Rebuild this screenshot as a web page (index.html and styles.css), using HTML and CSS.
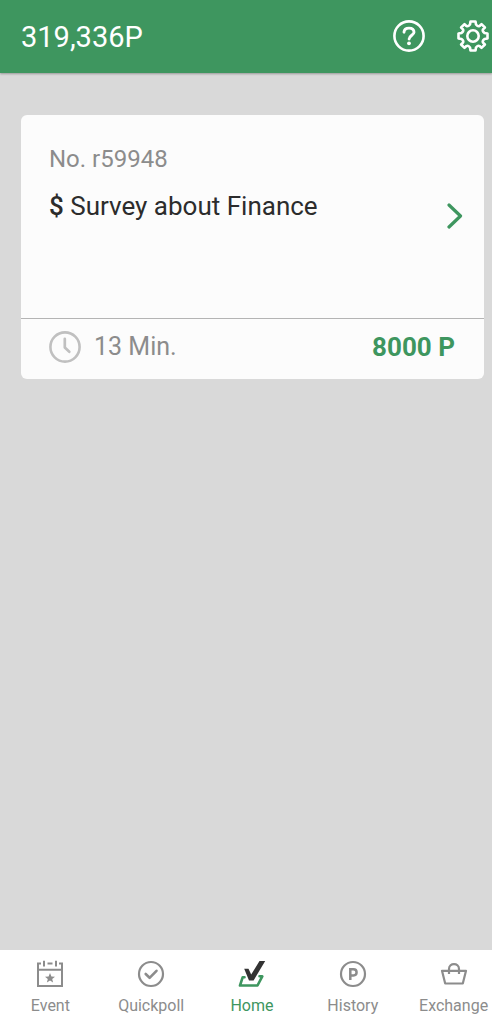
FILE: index.html
```html
<!DOCTYPE html>
<html lang="en">
<head>
<meta charset="utf-8">
<meta name="viewport" content="width=device-width, initial-scale=1">
<title>Surveys</title>
<link rel="stylesheet" href="styles.css">
</head>
<body>
<div class="app">
  <header class="topbar">
    <h1 class="balance">319,336P</h1>
    <div class="actions">
      <button class="icon-button" type="button" aria-label="Help">
        <svg class="icon" viewBox="-17 -17 34 34" fill="none" stroke="currentColor" stroke-linecap="round">
          <circle r="14.6" stroke-width="2.6"/>
          <path d="M-5-3.800C-4.800-6.600-2.800-7.900 0-7.900c3.100 0 5 1.700 5 4.200C5-.9.100-.4.100 3.100" stroke-width="2.900"/>
          <circle cy="7.300" r="1.900" fill="currentColor" stroke="none"/>
        </svg>
      </button>
      <button class="icon-button" type="button" aria-label="Settings">
        <svg class="icon" viewBox="-17 -17 34 34" fill="none" stroke="currentColor" stroke-width="2.600" stroke-linejoin="round">
          <circle r="5.700"/>
          <path d="M14.500-2.500V2.500L11.500 3Q9 5 10 6.600L11.900 8.500L8.500 11.900L6.600 10Q5 9 3 11.500L2.500 14.500H-2.500L-3 11.500Q-5 9-6.600 10L-8.500 11.900L-11.900 8.500L-10 6.600Q-9 5-11.500 3L-14.500 2.500V-2.500L-11.500-3Q-9-5-10-6.600L-11.900-8.500L-8.500-11.900L-6.600-10Q-5-9-3-11.500L-2.500-14.500H2.500L3-11.500Q5-9 6.600-10L8.500-11.900L11.900-8.500L10-6.600Q9-5 11.500-3Z"/>
        </svg>
      </button>
    </div>
  </header>

  <main class="content">
    <a class="card" href="#survey">
      <div class="card-body">
        <div class="card-text">
          <p class="card-number">No. r59948</p>
          <h2 class="card-title"><span class="currency">$</span> Survey about Finance</h2>
        </div>
        <svg class="chevron" viewBox="0 0 16 28" fill="none" stroke="currentColor" stroke-width="3.200" stroke-linecap="round" stroke-linejoin="round"><path d="M2 3L13.500 14L2 25"/></svg>
      </div>
      <div class="card-footer">
        <svg class="clock" viewBox="0 0 32 32" fill="none" stroke="currentColor" stroke-linecap="round" stroke-linejoin="round"><circle cx="16" cy="16" r="14.600" stroke-width="2.600"/><path d="M15.800 7.800V16.500L20.300 20.800" stroke-width="2.700"/></svg>
        <span class="duration">13 Min.</span>
        <strong class="reward">8000 P</strong>
      </div>
    </a>
  </main>

  <nav class="tabs" aria-label="Main">
    <a class="tab" href="#event">
      <svg class="tab-icon" viewBox="0 0 28 28" fill="none" stroke="currentColor" stroke-width="2"><path d="M5 3.500H2V26H26V3.500H23M11.500 3.500H16.500M2 9.700H26M8 .800V6.500M20 .800V6.500"/><path d="M14 13L15.400 16.400L19 16.700L16.200 19L17.100 22.600L14 20.600L10.900 22.600L11.800 19L9 16.700L12.600 16.400Z" fill="currentColor" stroke="none"/></svg>
      <span>Event</span>
    </a>
    <a class="tab" href="#quickpoll">
      <svg class="tab-icon" viewBox="0 0 28 28" fill="none" stroke="currentColor" stroke-linecap="round" stroke-linejoin="round"><circle cx="14" cy="14" r="12" stroke-width="2.200"/><path d="M8.700 14L12.600 17.800L19.500 10.800" stroke-width="2.600"/></svg>
      <span>Quickpoll</span>
    </a>
    <a class="tab tab-active" href="#home" aria-current="page">
      <svg class="tab-icon" viewBox="0 0 28 28"><path d="M6.500 17.200H4.700L2 25.500H19.500L24.300 16.300H21.500" fill="none" stroke="#3e965f" stroke-width="2.600" stroke-linejoin="round" stroke-linecap="round"/><path d="M6.200 8.700H10.500L13.200 14.500L21.500 1H27.200L15.600 20.500H11Z" fill="#333"/></svg>
      <span>Home</span>
    </a>
    <a class="tab" href="#history">
      <svg class="tab-icon" viewBox="0 0 28 28" fill="none" stroke="currentColor"><circle cx="14" cy="14" r="12" stroke-width="2.200"/><path d="M11.300 20V9.200H14.500C18.600 9.200 18.600 15.400 14.500 15.400H11.300" stroke-width="2.500"/></svg>
      <span>History</span>
    </a>
    <a class="tab" href="#exchange">
      <svg class="tab-icon" viewBox="0 0 28 28" fill="none" stroke="currentColor" stroke-width="2.200" stroke-linejoin="round"><path d="M2 10.800H26L22.800 23.500H5.200ZM9 14V9C9 2.600 19 2.600 19 9V14"/></svg>
      <span>Exchange</span>
    </a>
  </nav>
</div>
</body>
</html>
```
FILE: styles.css
```css
* {
  box-sizing: border-box;
}

body {
  margin: 0;
  font-family: Roboto, "Liberation Sans", sans-serif;
  background: #d9d9d9;
}

h1,
h2,
p {
  margin: 0;
  font-weight: 400;
}

svg {
  display: block;
}

a {
  color: inherit;
  text-decoration: none;
}

.app {
  display: flex;
  flex-direction: column;
  min-height: 100vh;
  overflow: hidden;
}

.topbar {
  display: flex;
  align-items: center;
  justify-content: space-between;
  height: 73px;
  padding: 0 2px 0 21px;
  color: #fff;
  background: #3e965f;
  box-shadow: 0 1px 2px rgba(0, 0, 0, 0.3);
}

.balance {
  font-size: 29px;
  line-height: 36px;
}

.actions {
  display: flex;
  gap: 30px;
  padding-bottom: 1px;
}

.icon-button {
  padding: 0;
  border: 0;
  color: inherit;
  background: none;
}

.icon {
  width: 34px;
  height: 34px;
}

.content {
  flex: 1;
  padding: 42px 8px 42px 21px;
}

.card {
  display: block;
  border-radius: 6px;
  background: #fcfcfc;
}

.card-body {
  display: flex;
  align-items: center;
  justify-content: space-between;
  min-height: 204px;
  padding: 28px 21px 30px 28px;
  border-bottom: 1px solid #b4b4b4;
}

.card-text {
  align-self: stretch;
}

.card-number {
  font-size: 24px;
  line-height: 32px;
  color: #8c8c8c;
}

.card-title {
  margin-top: 15px;
  font-size: 26px;
  line-height: 32px;
  color: #2c2c2c;
}

.currency {
  font-weight: 500;
}

.chevron {
  width: 16px;
  height: 28px;
  color: #3e965f;
}

.card-footer {
  display: flex;
  align-items: center;
  height: 60px;
  padding: 0 29px 4px 28px;
}

.clock {
  width: 32px;
  height: 32px;
  color: #c0c0c0;
}

.duration {
  margin-left: 13px;
  font-size: 25px;
  line-height: 32px;
  color: #8c8c8c;
}

.reward {
  margin-left: auto;
  font-size: 26px;
  line-height: 32px;
  font-weight: 700;
  color: #3e965f;
}

.tabs {
  display: grid;
  grid-template-columns: repeat(5, 1fr);
  margin-right: -12px;
  padding: 10px 0 8px;
  background: #fff;
}

.tab {
  display: flex;
  flex-direction: column;
  align-items: center;
  gap: 8px;
  font-size: 16px;
  line-height: 20px;
  color: #8c8c8c;
}

.tab-active {
  color: #3e965f;
}

.tab-icon {
  width: 28px;
  height: 28px;
}
```
